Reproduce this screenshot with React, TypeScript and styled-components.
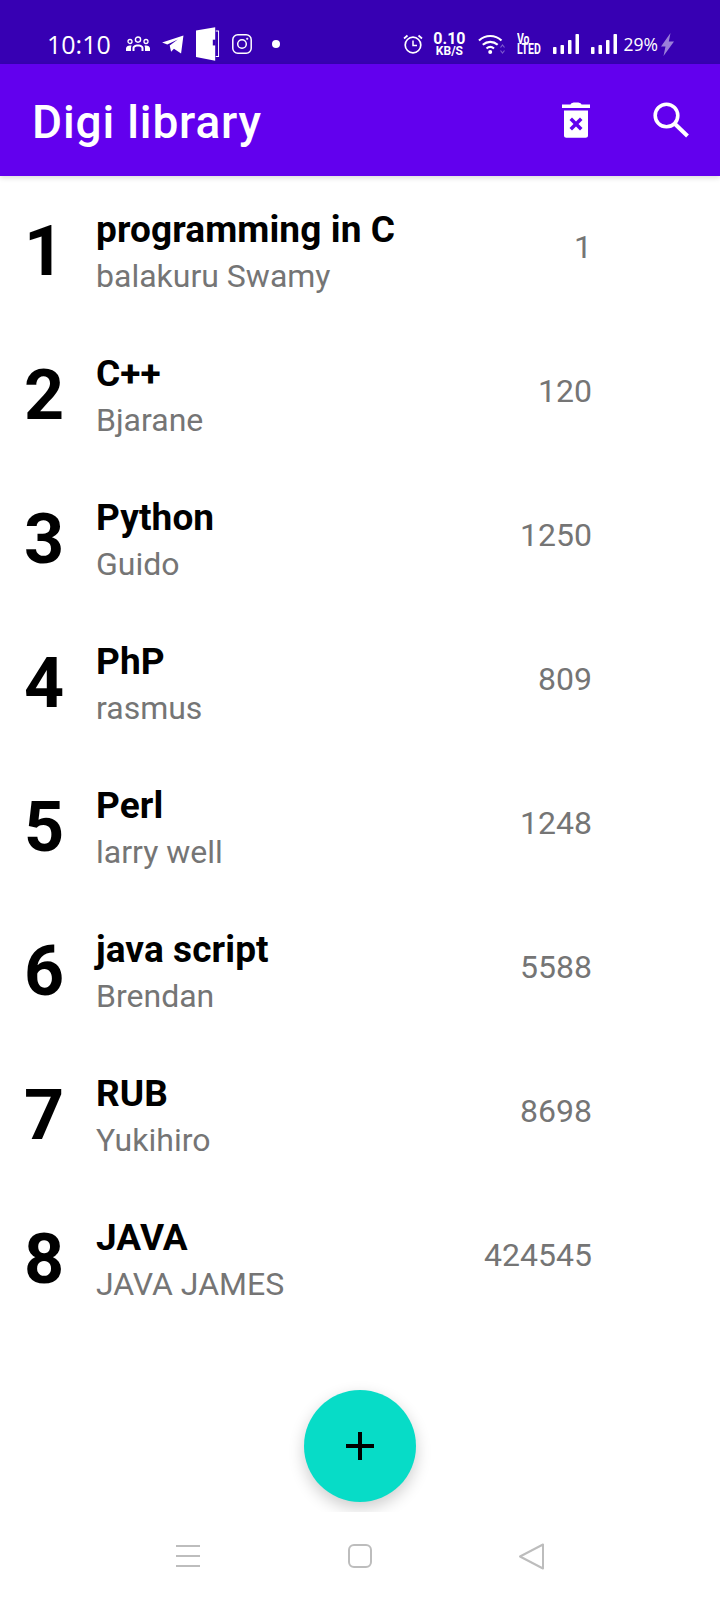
import React from "react";
import styled, { createGlobalStyle } from "styled-components";

const books = [
  { id: 1, title: "programming in C", author: "balakuru Swamy", pages: "1" },
  { id: 2, title: "C++", author: "Bjarane", pages: "120" },
  { id: 3, title: "Python", author: "Guido", pages: "1250" },
  { id: 4, title: "PhP", author: "rasmus", pages: "809" },
  { id: 5, title: "Perl", author: "larry well", pages: "1248" },
  { id: 6, title: "java script", author: "Brendan", pages: "5588" },
  { id: 7, title: "RUB", author: "Yukihiro", pages: "8698" },
  { id: 8, title: "JAVA", author: "JAVA JAMES", pages: "424545" },
];

function App() {
  return (
    <>
      <GlobalStyle />
      <Screen>
        <StatusBar>
          <NotifyGroup>
            <Clock>10:10</Clock>
            <PeopleIcon />
            <TelegramIcon />
            <DoorIcon />
            <InstagramIcon />
            <Dot />
          </NotifyGroup>
          <SystemGroup>
            <AlarmIcon />
            <Speed>
              <b>0.10</b>
              <small>KB/S</small>
            </Speed>
            <WifiIcon />
            <Volte>
              <span>Vo</span>
              <span>LTED</span>
            </Volte>
            <SignalIcon />
            <SignalIcon />
            <BatteryInfo>
              <Battery>29%</Battery>
              <BoltIcon />
            </BatteryInfo>
          </SystemGroup>
        </StatusBar>

        <AppBar>
          <AppTitle>Digi library</AppTitle>
          <AppActions>
            <TrashIcon />
            <SearchIcon />
          </AppActions>
        </AppBar>

        <BookList>
          {books.map((book) => (
            <BookRow key={book.id}>
              <BookNumber>{book.id}</BookNumber>
              <BookInfo>
                <BookTitle>{book.title}</BookTitle>
                <BookAuthor>{book.author}</BookAuthor>
              </BookInfo>
              <BookPages>{book.pages}</BookPages>
            </BookRow>
          ))}
        </BookList>

        <Fab>
          <svg width="28" height="28" viewBox="0 0 28 28">
            <path d="M12 0h4v12h12v4H16v12h-4V16H0v-4h12z" fill="#000" />
          </svg>
        </Fab>

        <NavBar>
          <svg width="24" height="22" viewBox="0 0 24 22" fill="none" stroke="#bdbdbd" strokeWidth="2">
            <path d="M0 1h24M0 11h24M0 21h24" />
          </svg>
          <svg width="24" height="24" viewBox="0 0 24 24" fill="none" stroke="#bdbdbd" strokeWidth="2">
            <rect x="1" y="1" width="22" height="22" rx="5" />
          </svg>
          <svg width="25" height="27" viewBox="0 0 25 27" fill="none" stroke="#bdbdbd" strokeWidth="2" strokeLinejoin="round">
            <path d="M24 1.500v24L1 13.500z" />
          </svg>
        </NavBar>
      </Screen>
    </>
  );
}

function PeopleIcon() {
  return (
    <svg width="24" height="16" viewBox="0 0 24 16" fill="#fff">
      <circle cx="12" cy="3.6" r="2.6" fill="none" stroke="#fff" strokeWidth="1.4" />
      <circle cx="4" cy="5.5" r="2" fill="none" stroke="#fff" strokeWidth="1.3" />
      <circle cx="20" cy="5.5" r="2" fill="none" stroke="#fff" strokeWidth="1.3" />
      <path d="M0 15v-2.500C0 10.500 2 9.500 4 9.500c.6 0 1.100.1 1.600.3-.4.6-.6 1.300-.6 2V15zM24 15v-2.500c0-2-2-3-4-3-.6 0-1.100.1-1.600.3.4.6.6 1.300.6 2V15zM6.500 15v-3c0-2 2.500-3.500 5.500-3.500s5.500 1.500 5.500 3.500v3h-2v-3c0-.8-1.500-1.500-3.500-1.500s-3.500.7-3.500 1.500v3z" />
    </svg>
  );
}

function TelegramIcon() {
  return (
    <svg width="22" height="19" viewBox="0 0 23 20" fill="#fff">
      <path d="M22.500 .5 20 19.500 12.500 14.500 9.500 17.500 8 11 16.500 4.800 5.500 10 0 7.800z" />
    </svg>
  );
}

function DoorIcon() {
  return (
    <svg width="24" height="34" viewBox="0 0 25 35" fill="#fff">
      <path d="M0 3.500 20 0v35L0 31z" />
      <path d="M20.500 3.500H24V31h-3.500v-1h2.500V4.500h-2.500z" />
      <rect x="17.500" y="13" width="3" height="6" fill="#3700b3" />
    </svg>
  );
}

function InstagramIcon() {
  return (
    <svg width="20" height="20" viewBox="0 0 20 20" fill="none" stroke="#fff" strokeWidth="1.500">
      <rect x=".8" y=".8" width="18.400" height="18.400" rx="5" />
      <circle cx="10" cy="10" r="4.300" />
      <circle cx="15.200" cy="4.800" r=".8" fill="#fff" strokeWidth=".6" />
    </svg>
  );
}

function AlarmIcon() {
  return (
    <svg width="20" height="20" viewBox="0 0 20 20" fill="none" stroke="#fff">
      <circle cx="10" cy="11" r="7.800" strokeWidth="1.700" />
      <path d="M10 6.500V11.500H14" strokeWidth="1.500" />
      <path d="M1 4.500 4.500 1.500M19 4.500 15.500 1.500" strokeWidth="1.700" />
    </svg>
  );
}

function WifiIcon() {
  return (
    <svg width="27" height="20" viewBox="0 0 27 20" fill="none">
      <path d="M1 6.500C7.500 .5 17 .5 23.500 6.500M4.800 10.800c4.500-4 10.400-4 14.900 0M8.500 14.500c2.300-1.900 5.200-1.900 7.500 0" stroke="#fff" strokeWidth="2.200" />
      <circle cx="12.200" cy="18" r="2" fill="#fff" />
      <path d="M22.500 13.500 24.500 11l2 2.500M22.500 16.500l2 2.500 2-2.500" stroke="#fff" strokeOpacity=".35" strokeWidth="1.200" />
    </svg>
  );
}

function SignalIcon() {
  return (
    <svg width="26" height="20" viewBox="0 0 26 20" fill="#fff">
      <rect x="0" y="13" width="3.500" height="7" rx=".8" />
      <rect x="7.500" y="11" width="3.500" height="9" rx=".8" />
      <rect x="15" y="6" width="3.500" height="14" rx=".8" />
      <rect x="22.500" y="0" width="3.500" height="20" rx=".8" />
    </svg>
  );
}

function BoltIcon() {
  return (
    <svg width="13" height="23" viewBox="0 0 13 23" fill="#fff" fillOpacity=".5">
      <path d="M9.500 0 0 13.500h4.500L2.500 23 13 8.500H7.800z" />
    </svg>
  );
}

function TrashIcon() {
  return (
    <svg width="28" height="36" viewBox="0 0 28 36" fill="#fff">
      <path d="M0 2.500h8.500C9 1 10.500.5 14 .5s5 .5 5.500 2H28v3.500H0z" />
      <path fillRule="evenodd" d="M2 8.500h24V33.500c0 1.300-1 2.300-2.300 2.300H4.300C3 35.800 2 34.800 2 33.500zM10 15.500 7.500 18l4 4-4 4 2.500 2.500 4-4 4 4 2.500-2.500-4-4 4-4-2.500-2.500-4 4z" />
    </svg>
  );
}

function SearchIcon() {
  return (
    <svg width="36" height="36" viewBox="0 0 36 36" fill="none" stroke="#fff">
      <circle cx="13.500" cy="13.500" r="11.300" strokeWidth="3.600" />
      <path d="M21.500 21.500 34.500 34" strokeWidth="4" />
    </svg>
  );
}

const GlobalStyle = createGlobalStyle`
  html, body {
    margin: 0;
    padding: 0;
    background: #fff;
  }

  body {
    font-family: Roboto, "Liberation Sans", sans-serif;
  }
`;

const Screen = styled.div`
  position: relative;
  width: 720px;
  height: 1600px;
  display: flex;
  flex-direction: column;
  overflow: hidden;
  background: #fff;
`;

const StatusBar = styled.div`
  height: 64px;
  flex: none;
  box-sizing: border-box;
  padding: 24px 46px 0 47px;
  display: flex;
  align-items: center;
  justify-content: space-between;
  background: #3700b3;
  color: #fff;
`;

const NotifyGroup = styled.div`
  display: flex;
  align-items: center;
  gap: 12px;
`;

const SystemGroup = styled.div`
  display: flex;
  align-items: center;
  gap: 12px;
`;

const Clock = styled.span`
  font-family: "Open Sans", sans-serif;
  font-size: 25px;
  width: 67px;
`;

const Dot = styled.span`
  width: 8px;
  height: 8px;
  margin-left: 8px;
  border-radius: 50%;
  background: #fff;
`;

const Speed = styled.span`
  display: flex;
  flex-direction: column;
  align-items: center;
  margin-left: -2px;

  b {
    font-size: 16px;
    font-weight: 700;
    line-height: 14px;
  }

  small {
    font-size: 12px;
    font-weight: 700;
    line-height: 10px;
  }
`;

const Volte = styled.span`
  display: flex;
  flex-direction: column;
  width: 24px;
  font-size: 14px;
  font-weight: 700;
  line-height: 10.500px;
  white-space: nowrap;

  span {
    transform: scaleX(0.75);
    transform-origin: left center;
  }
`;

const BatteryInfo = styled.span`
  display: flex;
  align-items: center;
  gap: 3px;
  margin-left: -5px;
`;

const Battery = styled.span`
  font-family: "Open Sans", sans-serif;
  font-size: 17.500px;
`;

const AppBar = styled.header`
  height: 112px;
  flex: none;
  box-sizing: border-box;
  padding: 0 31px 0 32px;
  display: flex;
  align-items: center;
  justify-content: space-between;
  background: #6200ee;
  color: #fff;
  box-shadow: 0 2px 5px rgba(0, 0, 0, 0.14);
`;

const AppTitle = styled.h1`
  margin: 0;
  padding-top: 4px;
  font-size: 46px;
  font-weight: 500;
  letter-spacing: 0.85px;
`;

const AppActions = styled.div`
  display: flex;
  align-items: center;
  gap: 63px;
`;

const BookList = styled.main`
  flex: 1;
`;

const BookRow = styled.div`
  height: 144px;
  box-sizing: border-box;
  padding: 24px 128px 0 24px;
  display: flex;
  align-items: flex-start;
`;

const BookNumber = styled.div`
  width: 72px;
  padding-top: 3px;
  font-size: 70px;
  font-weight: 700;
  line-height: 96px;
  color: #000;
`;

const BookInfo = styled.div`
  flex: 1;
  min-width: 0;
  padding-top: 6px;
`;

const BookTitle = styled.div`
  font-size: 37px;
  font-weight: 700;
  line-height: 48px;
  letter-spacing: 0.1px;
  color: #000;
`;

const BookAuthor = styled.div`
  font-size: 32px;
  line-height: 44px;
  color: #757575;
`;

const BookPages = styled.div`
  padding-top: 25px;
  font-size: 32px;
  line-height: 44px;
  color: #757575;
`;

const Fab = styled.button`
  position: absolute;
  left: 304px;
  top: 1390px;
  width: 112px;
  height: 112px;
  padding: 0;
  border: none;
  border-radius: 50%;
  display: flex;
  align-items: center;
  justify-content: center;
  background: #07dcc7;
  box-shadow: 0 6px 16px rgba(0, 0, 0, 0.2);
`;

const NavBar = styled.nav`
  position: relative;
  height: 88px;
  flex: none;
  box-sizing: border-box;
  padding: 0 176px;
  display: flex;
  align-items: center;
  justify-content: space-between;
  background: #fff;
`;

export default App;
